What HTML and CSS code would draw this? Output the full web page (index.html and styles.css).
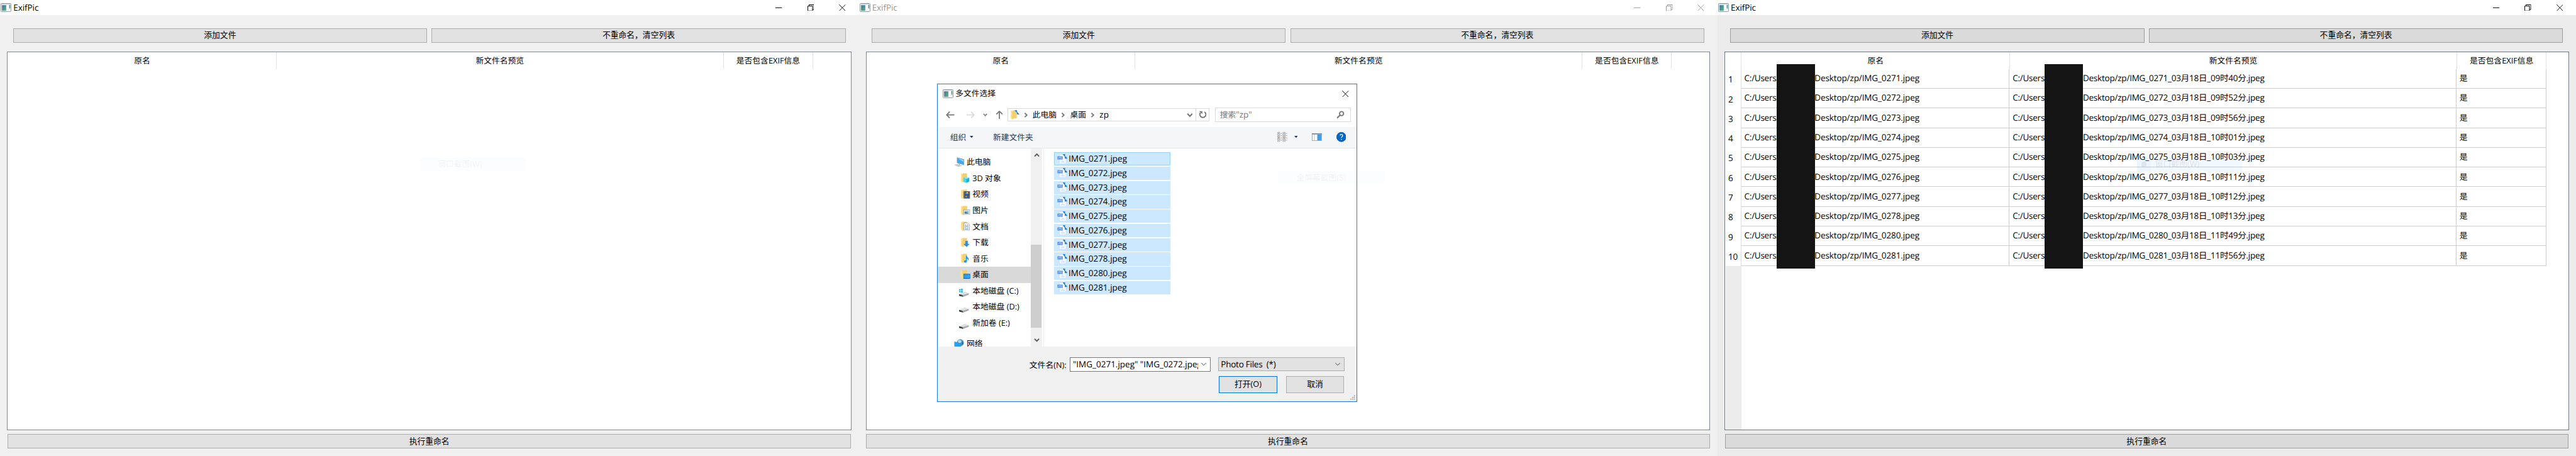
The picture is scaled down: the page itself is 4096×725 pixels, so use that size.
FILE: index.html
```
<!DOCTYPE html>
<html lang="zh-CN">
<head>
<meta charset="utf-8">
<title>ExifPic</title>
<link rel="stylesheet" href="styles.css">
</head>
<body>
<svg class="defs" width="0" height="0">
  <defs>
    <linearGradient id="g-app" x1="0" y1="0" x2="1" y2="1"><stop offset="0" stop-color="#3f73a4"/><stop offset="1" stop-color="#5cb57c"/></linearGradient>
    <linearGradient id="g-fold" x1="0" y1="0" x2="1" y2="0"><stop offset="0" stop-color="#ffe9a4"/><stop offset="1" stop-color="#f3cb63"/></linearGradient>
    <linearGradient id="g-blue" x1="0" y1="0" x2="1" y2="1"><stop offset="0" stop-color="#1e8fe6"/><stop offset="1" stop-color="#2fb4ff"/></linearGradient>
    <symbol id="app" viewBox="0 0 24 20" preserveAspectRatio="none"><rect x=".7" y=".7" width="22.4" height="18.4" rx="1.5" fill="#f1f3f5" stroke="#8e979f" stroke-width="1.4"/><path d="M2 2.2h20" stroke="#c9d3dd" stroke-width="1.6"/><rect x="3" y="4.5" width="9.5" height="12.5" fill="url(#g-app)"/><rect x="14" y="4" width="4.5" height="9" fill="#fff"/><rect x="19.2" y="4" width="2.3" height="8" fill="url(#g-app)"/></symbol>
    <symbol id="min" viewBox="0 0 15 15"><path d="M0 7.5h15" stroke="currentColor" stroke-width="1.5"/></symbol>
    <symbol id="restore" viewBox="0 0 15 15"><path d="M.7 3.7h10.6v10.6H.7zM3.5 3.5V.7h10.8v10.8h-2.8" fill="none" stroke="currentColor" stroke-width="1.4"/></symbol>
    <symbol id="close" viewBox="0 0 15 15"><path d="M.3.3l14.4 14.4M14.7.3L.3 14.7" stroke="currentColor" stroke-width="1.3"/></symbol>
    <symbol id="chev" viewBox="0 0 14 14"><path d="M1.5 4l5.5 5.5L12.500 4" fill="none" stroke="currentColor" stroke-width="3"/></symbol>
    <symbol id="thin" viewBox="0 0 14 14"><path d="M2 4.500l5 5 5-5" fill="none" stroke="#444" stroke-width="1.4"/></symbol>
    <symbol id="crumb" viewBox="0 0 10 14"><path d="M2 2.500L6.800 7 2 11.500" fill="none" stroke="#777" stroke-width="2.6"/></symbol>
    <symbol id="caret" viewBox="0 0 8 5"><path d="M0 0h8L4 4.500z" fill="#1e395b"/></symbol>
    <symbol id="arrow" viewBox="0 0 20 16"><path d="M19 8H2M8.500 1L1.800 8l6.700 7" fill="none" stroke="currentColor" stroke-width="2.5"/></symbol>
    <symbol id="folder" viewBox="0 0 22 22"><path d="M5 .8h10v18H5z" fill="#f3cf70"/><path d="M1.200.5l6 3v18l-6-3z" fill="url(#g-fold)"/></symbol>
    <symbol id="drive" viewBox="0 0 22 22"><path d="M0 15l13-6 9 3.500L8 17z" fill="#dfe1e3"/><path d="M8 17l14-4.500V16L9 21z" fill="#a9abae"/><path d="M0 15l8 2 1 4-9-2.500z" fill="#35393c"/><path d="M6 18.300l1.500.4" stroke="#3be04b" stroke-width="1.500"/></symbol>
    <symbol id="jpeg" viewBox="0 0 23 23"><path d="M5 1h8l7 6v13q0 1.500-1.500 1.500h-12Q5 21.500 5 20z" fill="#f6faff" stroke="#bcd5f5" stroke-width=".8"/><path d="M8 19q0-3 3-3 1-2 3-1 3 0 3.500 4z" fill="#d6e5f9"/><circle cx="11" cy="13.500" r="1.200" fill="#d6e5f9"/><rect x=".5" y="4.800" width="12" height="7.200" rx=".6" fill="#4f8ee8"/><path d="M2.800 6.500v3.200h-1M4.600 10V6.700h1.500v1.700H4.800M9 6.700H7.300v3.100H9M7.300 8.200h1.500M11.500 6.800H10v3h1.400V8.500" fill="none" stroke="#d9e8ff" stroke-width=".7"/><path d="M13 .8h4v4l-1.300-1.300M14 1.500l3.500 3.600M22.200 9.500h-4.500V5.200M22 9.200l-3.500-3.600" fill="#2586d0" stroke="#2586d0" stroke-width="1.500"/></symbol>
  </defs>
</svg>
<main class="stage">

<section class="window">
  <header class="titlebar"><svg class="app-icon"><use href="#app"/></svg><span class="title">ExifPic</span>
    <div class="controls"><svg><use href="#min"/></svg><svg><use href="#restore"/></svg><svg><use href="#close"/></svg></div></header>
  <div class="toolbar"><button class="btn">添加文件</button><button class="btn">不重命名，清空列表</button></div>
  <div class="table">
    <div class="thead"><span class="th">原名</span><span class="th">新文件名预览</span><span class="th">是否包含EXIF信息</span></div>
  </div>
  <button class="btn run">执行重命名</button>
  <div class="ghost ghost-a">窗口截图(W)</div>
</section>

<section class="window inactive">
  <header class="titlebar"><svg class="app-icon"><use href="#app"/></svg><span class="title">ExifPic</span>
    <div class="controls"><svg><use href="#min"/></svg><svg><use href="#restore"/></svg><svg><use href="#close"/></svg></div></header>
  <div class="toolbar"><button class="btn">添加文件</button><button class="btn">不重命名，清空列表</button></div>
  <div class="table">
    <div class="thead"><span class="th">原名</span><span class="th">新文件名预览</span><span class="th">是否包含EXIF信息</span></div>
  </div>
  <button class="btn run">执行重命名</button>

  <div class="dialog">
    <header class="dlg-title"><svg class="app-icon"><use href="#app"/></svg><span>多文件选择</span><svg class="dlg-close"><use href="#close"/></svg></header>
    <div class="nav">
      <svg class="back"><use href="#arrow"/></svg>
      <svg class="fwd"><use href="#arrow"/></svg>
      <svg class="recent"><use href="#chev"/></svg>
      <svg class="up"><use href="#arrow"/></svg>
      <div class="address">
        <svg class="addr-icon" viewBox="0 0 22 22"><use href="#folder" width="22" height="22"/><path d="M11 1h4v4l-4-4M14 3l3 3M20 9h-4V5l4 4" fill="#2586d0" stroke="#2586d0" stroke-width="1.400"/></svg>
        <svg class="crumb"><use href="#crumb"/></svg><span>此电脑</span>
        <svg class="crumb"><use href="#crumb"/></svg><span>桌面</span>
        <svg class="crumb"><use href="#crumb"/></svg><span class="latin">zp</span>
        <svg class="addr-drop"><use href="#chev"/></svg>
        <span class="refresh"><svg viewBox="0 0 18 18"><path d="M13 2.800A6.700 6.700 0 1 1 4 4.500" fill="none" stroke="#777" stroke-width="2.800"/><path d="M1.200 1.200h7v6.500z" fill="#777"/></svg></span>
      </div>
      <div class="search"><span>搜索<span class="latin">"zp"</span></span><svg viewBox="0 0 18 18"><circle cx="11.500" cy="6.500" r="4.600" fill="none" stroke="#777" stroke-width="2.600"/><path d="M8 10L1.500 16.500" stroke="#777" stroke-width="3"/></svg></div>
    </div>
    <div class="commands">
      <span>组织</span><svg class="caret"><use href="#caret"/></svg><span class="newdir">新建文件夹</span>
      <svg class="view" viewBox="0 0 22 22"><path d="M.5.500h5v20.500h-5zM.5 5.500h5M.5 10.500h5M.5 15.700h5M12.500.500h5v20.500h-5zM12.500 5.500h5M12.500 10.500h5M12.500 15.700h5" fill="#fff" stroke="#929292"/><path d="M7.500 3h3M7.500 8h3M7.500 13h3M7.500 18h3M19 3h3M19 8h3M19 13h3M19 18h3" stroke="#777"/><path d="M2 3h2M14 3h2" stroke="#2f6fb4" stroke-width="2"/><path d="M2 8h2M14 8h2" stroke="#7f8a2e" stroke-width="2"/><path d="M2 13h2M14 13h2" stroke="#b03a1c" stroke-width="2"/><path d="M2 18.300h2M14 18.300h2" stroke="#8b9199" stroke-width="2"/></svg>
      <svg class="caret"><use href="#caret"/></svg>
      <svg class="pane" viewBox="0 0 22 17"><rect x=".5" y=".5" width="21" height="16" fill="#fff" stroke="#7d8790"/><path d="M0 1.200h22" stroke="#7d8790" stroke-width="2.400"/><path d="M5.500 2v14" stroke="#a0a7ad"/><rect x="12" y="2.500" width="9" height="13.500" fill="#419be4"/></svg>
      <svg class="help" viewBox="0 0 22 22"><circle cx="11" cy="11" r="10.500" fill="#0066c8" stroke="#0b4b8c"/><path d="M8 7.500Q8.300 5 11 5t3 2.600q0 1.600-1.600 2.800-1.300 1-1.300 2.600" fill="none" stroke="#fff" stroke-width="1.800"/><circle cx="11.100" cy="16.300" r="1.200" fill="#fff"/></svg>
    </div>
    <div class="body">
      <div class="tree">
        <div class="node root"><svg viewBox="0 0 23 22"><path d="M7 1l15 4v12L7 12.500z" fill="#40aaf0" stroke="#7b8c99"/><path d="M8 2l13 3.500v5z" fill="#8ad2fa"/><path d="M12 15v4M8 18l9 1" stroke="#8d979f" stroke-width="1.500"/><path d="M0 17l7-2 10 4-7 3z" fill="#c4c9cd"/></svg>此电脑</div>
        <div class="node"><svg viewBox="0 0 22 22"><use href="#folder" width="22" height="22"/><path d="M7 11l6.500-1.800L20 11v8.500L13.500 22 7 19.500z" fill="#18b3cc"/><path d="M7 11l6.500-1.800L20 11l-6.500 2.300z" fill="#8eeaf4"/><path d="M7 11l6.500 2.300V22L7 19.500z" fill="#4fd6e6"/></svg>3D 对象</div>
        <div class="node"><svg viewBox="0 0 22 22"><use href="#folder" width="22" height="22"/><rect x="7.500" y="4.500" width="14" height="16" fill="#333"/><rect x="10.500" y="5.500" width="8" height="6.500" fill="#3f75c4"/><rect x="10.500" y="13" width="8" height="6.500" fill="#3862ad"/><path d="M9 5.500v14.500M20 5.500v14.500" stroke="#ddd" stroke-width="1.200" stroke-dasharray="1.300 1.300"/><circle cx="15.500" cy="8" r="1.900" fill="#e9b937"/><circle cx="13" cy="16" r="1.600" fill="#d5a636"/></svg>视频</div>
        <div class="node"><svg viewBox="0 0 22 22"><use href="#folder" width="22" height="22"/><rect x="7.500" y="9" width="13.500" height="10.500" fill="#fff" stroke="#939ba3"/><rect x="9.500" y="11" width="9.500" height="6.500" fill="#8ec3e8"/><path d="M9.500 14q4 0 9.500 3.500h-9.500z" fill="#35685c"/></svg>图片</div>
        <div class="node"><svg viewBox="0 0 22 22"><use href="#folder" width="22" height="22"/><path d="M8 3.500h9l3.500 3.500v12.500H8z" fill="#fff" stroke="#8e969d"/><path d="M10 8h3M15 8h3M10 11h8M10 14h3M15 14h3M10 17h8" stroke="#4285b8" stroke-width="1.300"/></svg>文档</div>
        <div class="node"><svg viewBox="0 0 22 22"><use href="#folder" width="22" height="22"/><path d="M11.500 7.500h5v6.500h3.500L14 20.500 8 14h3.500z" fill="#2e8fdf" stroke="#1b75c0" stroke-width=".6"/></svg>下载</div>
        <div class="node"><svg viewBox="0 0 22 22"><use href="#folder" width="22" height="22"/><path d="M13.500 5v12.500" stroke="#139af0" stroke-width="2"/><ellipse cx="11.300" cy="17.800" rx="3.200" ry="2.800" fill="#139af0"/><path d="M13.500 4.500q1 3 3.500 4.500 3 3 .5 7 0-4-4-5.500z" fill="#139af0"/></svg>音乐</div>
        <div class="node selected"><svg viewBox="0 0 22 22"><use href="#folder" width="22" height="22"/><rect x="7.500" y="9.500" width="14" height="10" fill="url(#g-blue)" stroke="#1268a8"/><path d="M8 19h13" stroke="#0b4c85"/></svg>桌面</div>
        <div class="node drive"><svg viewBox="0 0 22 22"><use href="#drive" width="22" height="22"/><path d="M0 4l3.500-.6v3.300H0zM4.300 3.300L8.200 2.700v4H4.300zM0 7.600h3.500v3.300L0 10.400zM4.300 7.600h3.900v4l-3.900-.6z" fill="#14b4ee"/></svg>本地磁盘 (C:)</div>
        <div class="node drive"><svg viewBox="0 0 22 22"><use href="#drive" width="22" height="22"/></svg>本地磁盘 (D:)</div>
        <div class="node drive"><svg viewBox="0 0 22 22"><use href="#drive" width="22" height="22"/></svg>新加卷 (E:)</div>
        <div class="node root network"><svg viewBox="0 0 23 22"><circle cx="14" cy="8.500" r="8" fill="#4f9bc4"/><path d="M9 3q5-2 7 1t-4 6q-4-1-3-7z" fill="#b8dcea"/><path d="M18 5q3 2 3 6l-4 2z" fill="#2c6f9c"/><path d="M1 6l14 4v11L1 19z" fill="#2c9fec" stroke="#3b83b4" stroke-width=".6"/></svg>网络</div>
      </div>
      <div class="scroll"><svg class="flip"><use href="#chev"/></svg><div class="track"><div class="thumb"></div></div><svg><use href="#chev"/></svg></div>
      <div class="divider"></div>
      <div class="files">
        <div class="file focus"><svg><use href="#jpeg"/></svg>IMG_0271.jpeg</div>
        <div class="file"><svg><use href="#jpeg"/></svg>IMG_0272.jpeg</div>
        <div class="file"><svg><use href="#jpeg"/></svg>IMG_0273.jpeg</div>
        <div class="file"><svg><use href="#jpeg"/></svg>IMG_0274.jpeg</div>
        <div class="file"><svg><use href="#jpeg"/></svg>IMG_0275.jpeg</div>
        <div class="file"><svg><use href="#jpeg"/></svg>IMG_0276.jpeg</div>
        <div class="file"><svg><use href="#jpeg"/></svg>IMG_0277.jpeg</div>
        <div class="file"><svg><use href="#jpeg"/></svg>IMG_0278.jpeg</div>
        <div class="file"><svg><use href="#jpeg"/></svg>IMG_0280.jpeg</div>
        <div class="file"><svg><use href="#jpeg"/></svg>IMG_0281.jpeg</div>
      </div>
    </div>
    <footer class="dlg-foot">
      <div class="line"><span class="label">文件名(N):</span>
        <div class="combo name"><span class="value">"IMG_0271.jpeg" "IMG_0272.jpeg"</span><svg><use href="#thin"/></svg></div>
        <div class="combo filter"><span class="value">Photo Files&nbsp; (*)</span><svg><use href="#thin"/></svg></div></div>
      <div class="line actions"><button class="btn ok">打开(O)</button><button class="btn cancel">取消</button></div>
      <svg class="grip" viewBox="0 0 11 11"><path d="M8 0h3v3H8zM4 4h3v3H4zM8 4h3v3H8zM0 8h3v3H0zM4 8h3v3H4zM8 8h3v3H8z" fill="#bdbdbd"/></svg>
    </footer>
  </div>
  <div class="ghost ghost-b">全屏幕截图(S)</div>
</section>

<section class="window dim">
  <header class="titlebar"><svg class="app-icon"><use href="#app"/></svg><span class="title">ExifPic</span>
    <div class="controls"><svg><use href="#min"/></svg><svg><use href="#restore"/></svg><svg><use href="#close"/></svg></div></header>
  <div class="toolbar"><button class="btn">添加文件</button><button class="btn">不重命名，清空列表</button></div>
  <div class="table numbered">
    <div class="thead"><span class="corner"></span><span class="th">原名</span><span class="th">新文件名预览</span><span class="th">是否包含EXIF信息</span></div>
    <div class="row"><b>1</b><div class="td"><i>C:/Users/</i><span class="old">Desktop/zp/IMG_0271.jpeg</span></div><div class="td"><i>C:/Users/</i><span class="new">Desktop/zp/IMG_0271_03月18日_09时40分.jpeg</span></div><div class="td">是</div></div>
    <div class="row"><b>2</b><div class="td"><i>C:/Users/</i><span class="old">Desktop/zp/IMG_0272.jpeg</span></div><div class="td"><i>C:/Users/</i><span class="new">Desktop/zp/IMG_0272_03月18日_09时52分.jpeg</span></div><div class="td">是</div></div>
    <div class="row"><b>3</b><div class="td"><i>C:/Users/</i><span class="old">Desktop/zp/IMG_0273.jpeg</span></div><div class="td"><i>C:/Users/</i><span class="new">Desktop/zp/IMG_0273_03月18日_09时56分.jpeg</span></div><div class="td">是</div></div>
    <div class="row"><b>4</b><div class="td"><i>C:/Users/</i><span class="old">Desktop/zp/IMG_0274.jpeg</span></div><div class="td"><i>C:/Users/</i><span class="new">Desktop/zp/IMG_0274_03月18日_10时01分.jpeg</span></div><div class="td">是</div></div>
    <div class="row"><b>5</b><div class="td"><i>C:/Users/</i><span class="old">Desktop/zp/IMG_0275.jpeg</span></div><div class="td"><i>C:/Users/</i><span class="new">Desktop/zp/IMG_0275_03月18日_10时03分.jpeg</span></div><div class="td">是</div></div>
    <div class="row"><b>6</b><div class="td"><i>C:/Users/</i><span class="old">Desktop/zp/IMG_0276.jpeg</span></div><div class="td"><i>C:/Users/</i><span class="new">Desktop/zp/IMG_0276_03月18日_10时11分.jpeg</span></div><div class="td">是</div></div>
    <div class="row"><b>7</b><div class="td"><i>C:/Users/</i><span class="old">Desktop/zp/IMG_0277.jpeg</span></div><div class="td"><i>C:/Users/</i><span class="new">Desktop/zp/IMG_0277_03月18日_10时12分.jpeg</span></div><div class="td">是</div></div>
    <div class="row"><b>8</b><div class="td"><i>C:/Users/</i><span class="old">Desktop/zp/IMG_0278.jpeg</span></div><div class="td"><i>C:/Users/</i><span class="new">Desktop/zp/IMG_0278_03月18日_10时13分.jpeg</span></div><div class="td">是</div></div>
    <div class="row"><b>9</b><div class="td"><i>C:/Users/</i><span class="old">Desktop/zp/IMG_0280.jpeg</span></div><div class="td"><i>C:/Users/</i><span class="new">Desktop/zp/IMG_0280_03月18日_11时49分.jpeg</span></div><div class="td">是</div></div>
    <div class="row"><b>10</b><div class="td"><i>C:/Users/</i><span class="old">Desktop/zp/IMG_0281.jpeg</span></div><div class="td"><i>C:/Users/</i><span class="new">Desktop/zp/IMG_0281_03月18日_11时56分.jpeg</span></div><div class="td">是</div></div>
    <div class="rest"></div>
  </div>
  <button class="btn run">执行重命名</button>
  <div class="mask mask-a"></div>
  <div class="mask mask-b"></div>
  <div class="ghost ghost-c"><span class="dot"></span>窗口截图(W)</div>
</section>
</main>
</body>
</html>
```
FILE: styles.css
```
* { box-sizing: border-box; }
html, body { margin: 0; background: #fff; overflow: hidden; }
.defs { position: absolute; }
svg { display: block; flex: none; }

.stage {
  zoom: 0.71111;
  display: grid;
  grid-template-columns: repeat(3, 1920px);
  width: 5760px;
  height: 1020px;
  font: 18px/24px "Open Sans", "Noto Sans CJK SC", sans-serif;
  text-rendering: geometricPrecision;
  color: #000;
}
.latin { font-size: 19px; }

/* application window */
.window {
  position: relative;
  display: flex;
  flex-direction: column;
  height: 1020px;
  background: #f0f0f0;
}
.titlebar {
  display: flex;
  align-items: center;
  height: 34px;
  padding: 0 29px 0 2px;
  background: #fff;
}
.app-icon { width: 24px; height: 20px; }
.title { margin-left: 4px; font-size: 19px; letter-spacing: -0.1px; }
.controls { display: flex; gap: 56px; margin-left: auto; }
.controls svg { width: 15px; height: 15px; }
.inactive .title, .inactive .controls { color: #999; }

.toolbar {
  display: grid;
  grid-template-columns: 1fr 1fr;
  gap: 10px;
  margin: 29px 29px 21px;
}
.btn {
  height: 32px;
  padding: 0;
  border: 1px solid #adadad;
  background: #e1e1e1;
  color: inherit;
  font: inherit;
  line-height: 28px;
}
.run { margin: 9px 17px 0; }

.table {
  display: flex;
  flex-direction: column;
  height: 846px;
  margin: 0 16px;
  border: 1px solid #828790;
  border-top-width: 1.5px;
  border-bottom-width: 1.5px;
  background: #fff;
}
.thead { display: flex; height: 37px; padding: 0 0 0 1px; }
.th {
  display: flex;
  align-items: center;
  justify-content: center;
  width: 600px;
  border-right: 1px solid #e2e2e2;
  white-space: nowrap;
}
.th:nth-last-child(2) { width: 1000px; }
.th:last-child { width: 200px; }

.dim { background: #ebebeb; }
.dim .btn { background: #dadada; border-color: #9d9d9d; }
.dim .table { border-color: #737885; }
.corner { width: 36px; border-right: 1px solid #e2e2e2; }
.row { display: flex; height: 44px; padding-left: 1px; }
.row b {
  width: 36px;
  padding: 12px 0 0 6px;
  border-right: 1px solid #dcdcdc;
  font-size: 19px;
  font-weight: 400;
  letter-spacing: -0.4px;
}
.td {
  display: flex;
  width: 599px;
  padding: 9px 0 0 6px;
  border-right: 1px solid #cdcdcd;
  border-bottom: 1px solid #cdcdcd;
  white-space: nowrap;
}
.td:nth-child(3) { width: 1000px; padding-left: 7px; }
.td:last-child { width: 200px; }
.td i { width: 157px; font-size: 19px; font-style: normal; letter-spacing: -0.35px; }
.old { font-size: 19px; letter-spacing: -0.15px; }
.new { font-size: 19px; letter-spacing: -0.3px; }
.rest { flex: 1; width: 37px; margin-top: 1px; background: #ebebeb; border-left: 1px solid #fff; }

.mask { position: absolute; top: 143px; width: 86px; height: 457px; background: #141414; }
.mask-a { left: 133px; }
.mask-b { left: 732px; }

.ghost {
  position: absolute;
  width: 237px;
  height: 30px;
  padding-left: 41px;
  background: rgba(80, 160, 255, 0.02);
  color: rgba(120, 90, 60, 0.075);
  line-height: 30px;
  white-space: nowrap;
}
.ghost-a { left: 938px; top: 352px; }
.ghost-b { left: 938px; top: 382px; }
.ghost-c {
  left: 938px;
  top: 352px;
  background: linear-gradient(90deg, rgba(80, 160, 255, 0.11) 31px, rgba(80, 160, 255, 0.07) 31px);
  color: rgba(110, 100, 90, 0.17);
}
.dot { position: absolute; left: 11px; top: 10px; width: 10px; height: 10px; border-radius: 5px; background: rgba(110, 90, 60, 0.1); }

/* file dialog */
.dialog {
  position: absolute;
  left: 175px;
  top: 187px;
  display: flex;
  flex-direction: column;
  width: 940px;
  height: 711px;
  border: 1px solid #1883d7;
  background: #fff;
}
.dlg-title { display: flex; align-items: center; gap: 5px; height: 42px; padding: 0 17px 0 11px; }
.dlg-close { width: 15px; height: 15px; margin-left: auto; }
.nav { display: flex; align-items: center; height: 53px; padding: 0 12px 0 18px; color: #777; }
.back, .fwd { width: 20px; height: 16px; }
.fwd { margin-left: 26px; transform: scaleX(-1); color: #dcdcdc; }
.recent { width: 10px; height: 10px; margin-left: 18px; }
.up { width: 20px; height: 16px; margin-left: 16px; transform: rotate(90deg); }
.address {
  display: flex;
  align-items: center;
  width: 452px;
  height: 30px;
  margin-left: 8px;
  padding-left: 5px;
  border: 1px solid #d9d9d9;
  color: #000;
}
.addr-icon { width: 22px; height: 22px; }
.crumb { width: 10px; height: 14px; margin: 0 10px 0 11px; }
.address span + .crumb { margin-left: 10px; }
.addr-icon + .crumb { margin-left: 8px; }
.addr-drop { width: 14px; height: 14px; margin-left: auto; color: #777; }
.refresh {
  display: flex;
  align-items: center;
  justify-content: center;
  width: 30px;
  height: 28px;
  margin-left: 6px;
  border-left: 1px solid #d9d9d9;
}
.refresh svg { width: 18px; height: 18px; }
.search {
  display: flex;
  align-items: center;
  justify-content: space-between;
  width: 304px;
  height: 33px;
  margin-left: 12px;
  padding: 0 12px 0 10px;
  border: 1px solid #d9d9d9;
}
.search svg { width: 18px; height: 18px; }

.commands {
  display: flex;
  align-items: center;
  height: 48px;
  padding: 0 24px 0 28px;
  border-bottom: 1px solid #e6e7e8;
  background: #f5f6f7;
  color: #1e395b;
}
.caret { width: 8px; height: 5px; margin-left: 8px; }
.newdir { margin-left: 44px; }
.view { width: 22px; height: 22px; margin-left: auto; }
.view + .caret { margin-left: 15px; }
.pane { width: 22px; height: 17px; margin-left: 32px; }
.help { width: 22px; height: 22px; margin-left: 32px; }

.body { display: flex; height: 443px; }
.tree { width: 208px; height: 443px; padding-top: 13px; overflow: hidden; }
.node { display: flex; align-items: center; gap: 5px; height: 36px; padding-left: 51px; white-space: nowrap; }
.node svg { width: 22px; height: 22px; }
.node.root { padding-left: 37px; }
.root svg { width: 23px; }
.node.drive { padding-left: 48px; gap: 8px; }
.drive svg { margin-top: 6px; }
.selected { background: #d9d9d9; }
.network { margin-top: 11px; }
.scroll {
  display: flex;
  flex-direction: column;
  align-items: center;
  width: 25px;
  margin-left: 1px;
  padding: 9px 0 7px;
  background: #f0f0f0;
  color: #606060;
}
.scroll svg { width: 13px; height: 13px; }
.flip { transform: scaleY(-1); }
.track { flex: 1; align-self: stretch; padding-top: 194px; }
.thumb { width: 24px; height: 185px; background: #cdcdcd; }
.divider { width: 2px; margin-left: 2px; background: #f0f0f0; }
.files { display: flex; flex-direction: column; gap: 2px; padding: 9px 0 0 23px; }
.file {
  display: flex;
  align-items: center;
  gap: 3px;
  width: 260px;
  height: 30px;
  padding-left: 6px;
  background: #cce8ff;
  font-size: 19px;
}
.file svg { width: 23px; height: 23px; }
.focus { padding-left: 5px; border: 1px solid #99d1ff; }

.dlg-foot { position: relative; flex: 1; padding: 24px 27px 0 0; background: #f0f0f0; }
.line { display: flex; justify-content: flex-end; }
.label { margin-right: 8px; line-height: 34px; }
.combo { display: flex; align-items: center; height: 33px; border: 1px solid #7a7a7a; background: #fff; }
.value { overflow: hidden; white-space: pre; font-size: 19px; }
.combo svg { width: 14px; height: 14px; margin-left: auto; }
.name { width: 314px; padding: 0 6px 0 5px; }
.name .value { width: 280px; }
.filter { width: 282px; height: 32px; margin-left: 18px; padding: 0 7px 0 4px; border-color: #adadad; background: #e1e1e1; }
.filter .value { letter-spacing: -0.35px; }
.actions { gap: 20px; margin-top: 9px; padding-right: 1px; }
.actions .btn { width: 130px; height: 37px; }
.actions .ok { border: 2px solid #0078d7; }
.grip { position: absolute; right: 3px; bottom: 2px; width: 11px; height: 11px; }
```
